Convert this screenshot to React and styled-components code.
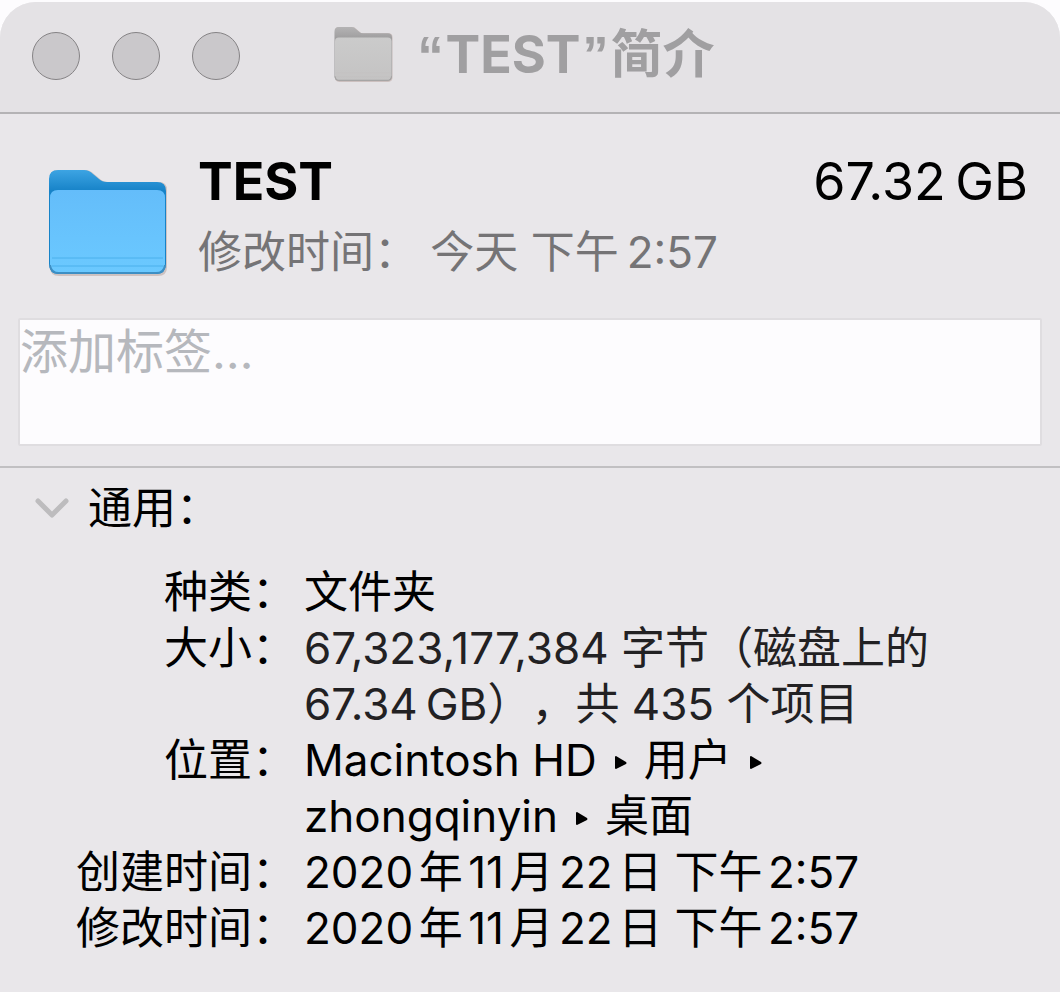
import React, { useState } from 'react'
import styled, { createGlobalStyle } from 'styled-components';

const GlobalStyle = createGlobalStyle`
* {
box-sizing:border-box;
}
body {
margin:0;
background-color:#fdfcfe;
font-family:Inter, "Noto Sans CJK SC", sans-serif;
}
`;
const Window = styled.main`
margin-top:2px;
min-height:calc(100vh - 2px);
background-color:#e9e7ea;
border-radius:36px 36px 0 0;
overflow:hidden;
color:#000;
`;
const TitleBar = styled.header`
display:grid;
grid-template-columns:1fr auto 1fr;
align-items:center;
height:112px;
padding:0 44px 2px 32px;
background-color:#e4e2e5;
border-bottom:2px solid #b4b3b5;
`;
const Lights = styled.div`
display:flex;
gap:32px;
`;
const Light = styled.button`
width:48px;
height:48px;
padding:0;
border:1px solid #858385;
border-radius:50%;
background-color:#cac8cb;
`;
const Title = styled.h1`
display:flex;
align-items:center;
gap:20px;
margin:0;
padding-bottom:2px;
font-size:52px;
line-height:60px;
font-weight:700;
color:#a09fa1;
white-space:nowrap;
`;
const Quote = styled.span`
padding:0 2px;
font-family:"Liberation Sans", sans-serif;
`;
const Summary = styled.section`
display:flex;
align-items:flex-end;
gap:26px;
padding:36px 32px 36px 46px;
`;
const SummaryText = styled.div`
flex:1;
`;
const SummaryTop = styled.div`
display:flex;
justify-content:space-between;
font-size:52px;
line-height:64px;
`;
const Name = styled.h2`
margin:0;
font-size:52px;
font-weight:700;
`;
const Size = styled.span`
font-size:52px;
`;
const Modified = styled.p`
margin:8px 0 0;
font-size:44px;
line-height:60px;
color:#757476;
`;
const Tags = styled.div`
padding:0 18px 20px;
border-bottom:2px solid #c1c0c2;
`;
const TagsInput = styled.textarea`
display:block;
width:100%;
height:128px;
padding:0;
border:2px solid #dfdde0;
border-radius:2px;
background-color:#fdfcfe;
font-family:inherit;
font-size:48px;
line-height:64px;
resize:none;
outline:none;
&::placeholder {
color:#b6b8bd;
opacity:1;
}
`;
const Toggle = styled.button`
display:flex;
align-items:center;
gap:18px;
margin:12px 0 28px 34px;
padding:0;
border:0;
background:none;
font-family:inherit;
font-size:44px;
line-height:56px;
color:#000;
`;
const Details = styled.dl`
display:grid;
grid-template-columns:auto 1fr;
column-gap:8px;
margin:0;
padding:0 80px 32px 76px;
font-size:44px;
line-height:56px;
`;
const Label = styled.dt`
text-align:right;
`;
const Value = styled.dd`
margin:0;
color:${(props) => (props.$soft ? '#222123' : '#000')};
text-autospace:normal;
text-spacing-trim:space-all;
`;
const Arrow = styled.svg`
width:12px;
height:14px;
margin:0 17px 6px 18px;
`;

function FolderIcon({ id, width, height, back, edge, top, bottom, line, stroke }) {
    return (
        <svg width={width} height={height} viewBox="0 0 126 116" preserveAspectRatio="none" aria-hidden="true">
            <defs>
                <linearGradient id={id + 'back'} x1="0" y1="0" x2="0" y2="1">
                    <stop offset="0" stopColor={back} />
                    <stop offset=".2" stopColor={edge} />
                </linearGradient>
                <linearGradient id={id + 'front'} x1="0" y1="0" x2="0" y2="1">
                    <stop offset="0" stopColor={top} />
                    <stop offset="1" stopColor={bottom} />
                </linearGradient>
            </defs>
            <path d="M4 99V12Q4 4 12 4H39Q44 4 48 8L54 13Q57 16 62 16H113Q121 16 121 24V101Q121 110 112 110H13Q4 110 4 101Z" fill="#bcaaa5" opacity=".6" />
            <path d="M3 97V13Q3 4 12 4H38Q43 4 47 8L53 13Q56 16 61 16H111Q120 16 120 25V98Q120 108 110 108H13Q3 108 3 98Z" fill={`url(#${id}back)`} />
            <path d="M4 32Q4 24 12 24H111Q119 24 119 32V98Q119 107 110 107H13Q4 107 4 98Z" fill={`url(#${id}front)`} />
            <path d="M6 92H117M6 100H117" stroke={line} strokeWidth="1" fill="none" />
            <path d="M4 99Q5 107 13 107H110Q118 107 119 99" stroke={stroke} strokeWidth="2" fill="none" />
        </svg>
    );
}

function Separator() {
    return <Arrow viewBox="0 0 12 14" role="img" aria-label="▸"><path d="M0 1Q0 0 1 0L11 6Q12 7 11 8L1 13Q0 13 0 12Z" fill="#000" /></Arrow>
}

function App() {
    const [open, setOpen] = useState(true);
    const [tags, setTags] = useState("");

    return (
        <>
            <GlobalStyle />
            <Window>
                <TitleBar>
                    <Lights>
                        <Light aria-label="关闭" />
                        <Light aria-label="最小化" />
                        <Light aria-label="缩放" />
                    </Lights>
                    <Title>
                        <FolderIcon id="small" width="62" height="60" back="#b4b3b4" edge="#a09fa0" top="#cbcbcb" bottom="#c4c3c3" line="#c3c2c2" stroke="#a3a2a2" />
                        <span><Quote>“</Quote>TEST<Quote>”</Quote>简介</span>
                    </Title>
                </TitleBar>
                <Summary>
                    <FolderIcon id="big" width="126" height="116" back="#3da4e3" edge="#1783c8" top="#64bdfa" bottom="#6bc9ff" line="#4bb0ec" stroke="#3d8fc4" />
                    <SummaryText>
                        <SummaryTop>
                            <Name>TEST</Name>
                            <Size>67.32&thinsp;GB</Size>
                        </SummaryTop>
                        <Modified>修改时间： 今天 下午&thinsp;2:57</Modified>
                    </SummaryText>
                </Summary>
                <Tags>
                    <TagsInput aria-label="标签" placeholder="添加标签…" value={tags} onChange={(e) => setTags(e.target.value)} />
                </Tags>
                <Toggle aria-expanded={open} onClick={() => setOpen(!open)}>
                    <svg width="36" height="24" viewBox="0 0 36 24" aria-hidden="true">
                        <path d="M4 5L18 19L32 5" fill="none" stroke="#bdbcbe" strokeWidth="5" strokeLinecap="round" strokeLinejoin="round" />
                    </svg>
                    通用：
                </Toggle>
                {open && (
                    <Details>
                        <Label>种类：</Label>
                        <Value>文件夹</Value>
                        <Label>大小：</Label>
                        <Value $soft>67,323,177,384 字节（磁盘上的67.34&thinsp;GB），共 435 个项目</Value>
                        <Label>位置：</Label>
                        <Value>Macintosh HD<Separator />用户<Separator /><br />zhongqinyin<Separator />桌面</Value>
                        <Label>创建时间：</Label>
                        <Value>2020年11月22日 下午2:57</Value>
                        <Label>修改时间：</Label>
                        <Value>2020年11月22日 下午2:57</Value>
                    </Details>
                )}
            </Window>
        </>
    );
}

export default App
